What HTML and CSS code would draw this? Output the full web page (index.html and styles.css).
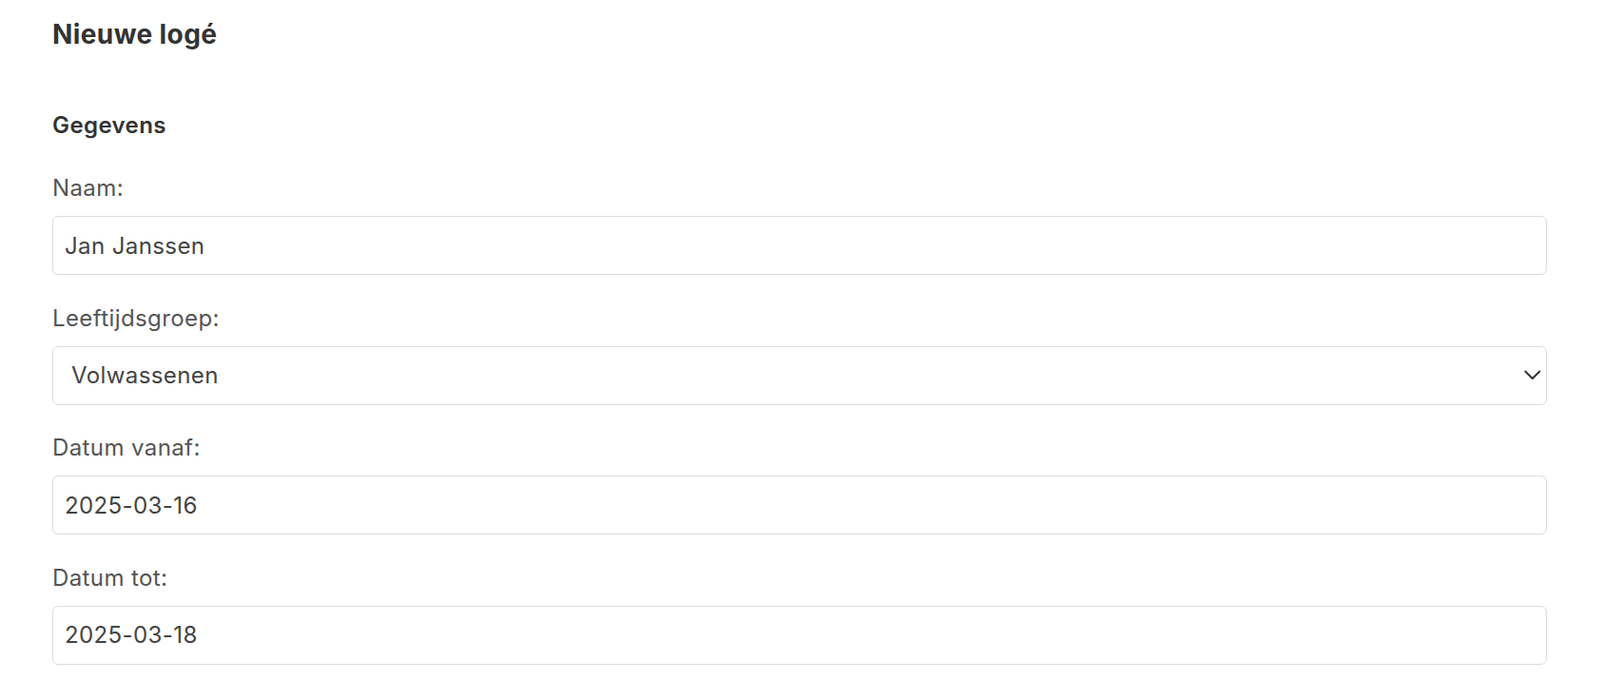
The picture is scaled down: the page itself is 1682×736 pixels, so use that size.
FILE: index.html
```html
<!DOCTYPE html>
<html lang="nl">
<head>
    <meta charset="UTF-8">
    <meta name="viewport" content="width=device-width, initial-scale=1.0">
    <title>Nieuwe logé</title>
    <link rel="stylesheet" href="styles.css">
</head>
<body>
    <div class="pagina">
        <h2 class="titel">Nieuwe logé</h2>

        <!-- Formulier logé -->
        <form id="logeForm">
            <h3 class="sectie">Gegevens</h3>

            <div class="veld">
                <label for="naam">Naam:</label>
                <input type="text" id="naam" value="Jan Janssen">
            </div>

            <div class="veld">
                <label for="groep">Leeftijdsgroep:</label>
                <div class="select-wrap">
                    <select id="groep">
                        <option>Volwassenen</option>
                        <option>Kinderen</option>
                        <option>Baby's</option>
                    </select>
                    <svg class="pijl" width="18" height="11" viewBox="0 0 18 11">
                        <path d="M1.5 1.5 L9 9 L16.5 1.5" fill="none" stroke="#333" stroke-width="2" stroke-linecap="round" stroke-linejoin="round"/>
                    </svg>
                </div>
            </div>

            <div class="veld">
                <label for="vanaf">Datum vanaf:</label>
                <input type="text" id="vanaf" value="2025-03-16">
            </div>

            <div class="veld">
                <label for="tot">Datum tot:</label>
                <input type="text" id="tot" value="2025-03-18">
            </div>
        </form>
    </div>
</body>
</html>
```

FILE: styles.css
```css
body {
    margin: 0;
    font-family: 'Inter', 'Noto Sans', sans-serif;
    letter-spacing: 0.4px;
    background-color: #fff;
    color: #333;
}

.pagina {
    padding: 19px 56px 0 55px;
}

.titel {
    font-size: 28px;
    font-weight: 700;
    line-height: 34px;
    margin: 0 0 65px 0;
    color: #333;
}

.sectie {
    font-size: 24px;
    font-weight: 600;
    line-height: 27px;
    margin: 0 0 35px 0;
    color: #333;
}

.veld {
    margin-bottom: 27.5px;
}

.veld label {
    display: block;
    font-size: 24px;
    line-height: 36px;
    color: #555;
    margin-bottom: 11px;
}

.veld input,
.veld select {
    display: block;
    box-sizing: border-box;
    width: 100%;
    height: 62px;
    padding: 0 12px;
    border: 1px solid #dcdcdc;
    border-radius: 6px;
    font-family: inherit;
    font-size: 24px;
    letter-spacing: 0.4px;
    color: #444;
    background-color: #fff;
    outline: none;
}

.select-wrap {
    position: relative;
}

.veld select {
    appearance: none;
    -webkit-appearance: none;
    padding-left: 19px;
}

.pijl {
    position: absolute;
    right: 6px;
    top: 25px;
    pointer-events: none;
}
```
